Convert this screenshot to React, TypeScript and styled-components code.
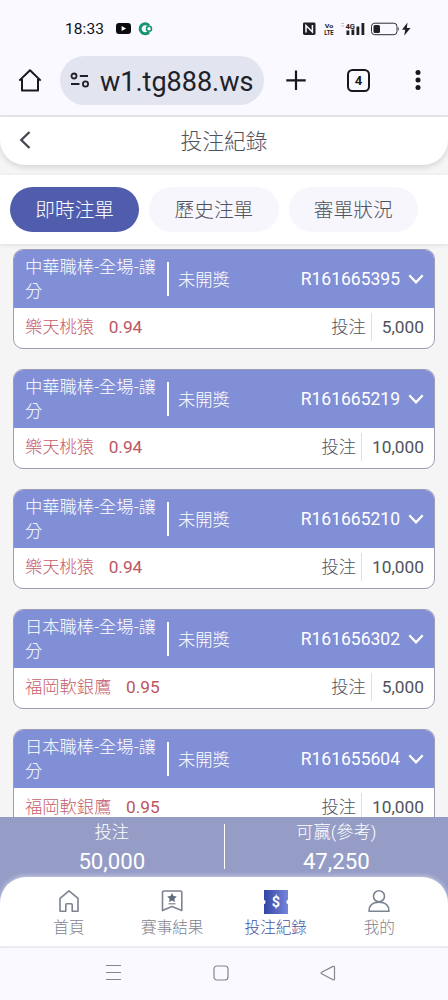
import React from "react";
import styled, { createGlobalStyle } from "styled-components";

interface Bet {
  id: string;
  play: string;
  team: string;
  odds: string;
  amount: string;
}

const bets: Bet[] = [
  { id: "R161665395", play: "中華職棒-全場-讓分", team: "樂天桃猿", odds: "0.94", amount: "5,000" },
  { id: "R161665219", play: "中華職棒-全場-讓分", team: "樂天桃猿", odds: "0.94", amount: "10,000" },
  { id: "R161665210", play: "中華職棒-全場-讓分", team: "樂天桃猿", odds: "0.94", amount: "10,000" },
  { id: "R161656302", play: "日本職棒-全場-讓分", team: "福岡軟銀鷹", odds: "0.95", amount: "5,000" },
  { id: "R161655604", play: "日本職棒-全場-讓分", team: "福岡軟銀鷹", odds: "0.95", amount: "10,000" },
];

const tabs = ["即時注單", "歷史注單", "審單狀況"];

const GlobalStyle = createGlobalStyle`
  * {
    box-sizing: border-box;
  }
  body {
    margin: 0;
    font-family: Roboto, "Noto Sans CJK TC", sans-serif;
    font-weight: 300;
    color: #50525e;
  }
  svg {
    display: block;
    flex-shrink: 0;
  }
`;

const Screen = styled.div`
  display: flex;
  flex-direction: column;
  width: 448px;
  height: 1000px;
  overflow: hidden;
  background: #f5f5f5;
`;

const StatusBar = styled.div`
  display: flex;
  align-items: center;
  flex-shrink: 0;
  height: 48px;
  padding: 10px 37px 0 65px;
  background: #faf9ff;
`;

const Clock = styled.span`
  width: 51px;
  font-size: 15.5px;
  font-weight: 400;
  letter-spacing: 0.1px;
  color: #111;
`;

const StatusIcons = styled.div`
  margin-left: auto;
`;

const BrowserBar = styled.div`
  display: flex;
  align-items: center;
  flex-shrink: 0;
  height: 69px;
  padding: 0 20px 3px 17px;
  border-bottom: 2px solid #e9e9ed;
  background: #faf9ff;
`;

const AddressPill = styled.div`
  display: flex;
  align-items: center;
  width: 204px;
  height: 49px;
  margin: 0 20px 0 17px;
  padding-left: 10px;
  border-radius: 25px;
  background: #e2e4f0;
`;

const Url = styled.span`
  margin: 3px 0 0 10px;
  font-size: 27px;
  font-weight: 400;
  white-space: nowrap;
  color: #202127;
`;

const TabCount = styled.div`
  display: flex;
  align-items: center;
  justify-content: center;
  width: 23px;
  height: 23px;
  margin: 0 45px 0 39px;
  border: 2.2px solid #17181c;
  border-radius: 5.5px;
  font-size: 13px;
  font-weight: 700;
  color: #17181c;
`;

const PageHeader = styled.header`
  display: grid;
  grid-template-columns: 50px 1fr 50px;
  align-items: center;
  flex-shrink: 0;
  height: 48px;
  border-radius: 0 0 25px 25px;
  background: #fff;
  box-shadow: 0 2px 6px rgba(0, 0, 0, 0.14);
`;

const BackButton = styled.div`
  padding: 0 0 2px 18px;
`;

const Title = styled.div`
  padding-top: 2px;
  font-size: 21.8px;
  line-height: 46px;
  text-align: center;
`;

const TabRow = styled.nav`
  display: flex;
  gap: 10px;
  flex-shrink: 0;
  height: 69px;
  margin-top: 10px;
  padding: 12px 10px 0;
  background: #fff;
  box-shadow: 0 1px 4px rgba(0, 0, 0, 0.1);
`;

const Tab = styled.div<{ $active: boolean }>`
  width: 129.3px;
  height: 45px;
  border-radius: 23px;
  font-size: 19.7px;
  line-height: 48px;
  text-align: center;
  color: ${({ $active }) => ($active ? "#fff" : "#50525e")};
  background: ${({ $active }) => ($active ? "#505dac" : "#f6f6fc")};
`;

const BetList = styled.main`
  display: flex;
  flex-direction: column;
  gap: 20px;
  height: 573px;
  flex-shrink: 0;
  padding: 5px 13px 0;
  overflow: hidden;
`;

const Card = styled.div`
  flex-shrink: 0;
  height: 100px;
  border: 1.5px solid #9c9db4;
  border-radius: 10px;
  overflow: hidden;
  background: #fff;
  font-size: 17.3px;
`;

const CardHead = styled.div`
  display: flex;
  align-items: center;
  height: 58px;
  padding: 0 10px 0 11px;
  color: #fff;
  background: #818fd6;
`;

const Play = styled.div`
  width: 142px;
  padding-right: 8px;
  line-height: 24px;
`;

const Status = styled.div`
  display: flex;
  align-items: center;
  height: 34px;
  padding: 0 0 2px 9px;
  border-left: 2px solid #fff;
`;

const BetId = styled.div`
  margin: 0 8px 0 auto;
  font-size: 17.5px;
  font-weight: 400;
`;

const CardBody = styled.div`
  display: flex;
  align-items: center;
  height: 38px;
  padding: 0 10px 0 11px;
  line-height: 19px;
`;

const Team = styled.span`
  color: #c5606c;
`;

const Odds = styled.span`
  margin: 0 auto 0 14.5px;
  font-weight: 400;
  color: #bd5562;
`;

const Amount = styled.span`
  display: flex;
  align-items: center;
  height: 28px;
  margin-left: 5px;
  padding-left: 10px;
  border-left: 1px solid #dedee2;
  font-weight: 400;
`;

const Summary = styled.div`
  display: flex;
  flex-shrink: 0;
  height: 90px;
  padding-top: 2px;
  background: #959dc7;
`;

const SummaryItem = styled.div`
  flex: 1;
  text-align: center;
  color: #fff;
`;

const SummaryDivider = styled.div`
  width: 1px;
  height: 45px;
  margin-top: 5px;
  background: #fff;
`;

const SummaryLabel = styled.div`
  font-size: 17.3px;
  line-height: 26px;
`;

const SummaryValue = styled.div`
  margin-top: 3px;
  font-size: 22.2px;
  font-weight: 400;
  line-height: 26px;
`;

const BottomNav = styled.nav`
  display: flex;
  flex-shrink: 0;
  height: 69px;
  margin-top: -30px;
  padding: 11px 17px 0;
  border-radius: 26px 26px 0 0;
  background: #fff;
  box-shadow: 0 -1px 5px rgba(255, 255, 255, 0.5);
  z-index: 1;
`;

const NavItem = styled.div<{ $active?: boolean }>`
  display: flex;
  flex: 1;
  flex-direction: column;
  align-items: center;
  gap: 1px;
  font-size: 15.6px;
  line-height: 26px;
  color: ${({ $active }) => ($active ? "#4453a4" : "#81838f")};
`;

const SystemBar = styled.div`
  display: flex;
  align-items: center;
  justify-content: space-between;
  flex-shrink: 0;
  height: 54px;
  padding: 0 112px 3px 105px;
  border-top: 2px solid #e9e9ef;
  background: #faf9ff;
`;

const NotificationIcons = () => (
  <svg width="40" height="16" viewBox="0 0 40 16">
    <rect x="0" y="2" width="15" height="11" rx="3" fill="#0c0c0e" />
    <path d="M5.6 5v5l4.5-2.5z" fill="#fff" />
    <path d="M33 4.600A5 5 0 1 0 33 11" fill="none" stroke="#159570" strokeWidth="3" />
    <circle cx="33" cy="7.800" r="2.500" fill="#faf9ff" stroke="#159570" strokeWidth="1.600" />
  </svg>
);

const SignalIcons = () => (
  <svg width="108" height="18" viewBox="0 0 108 18" fill="#202024" fontFamily="Roboto" fontWeight="700">
    <rect x="0" y="2.500" width="12.500" height="12.500" rx="1.400" />
    <path d="M3 12.500v-7l6.400 6.500V5" fill="none" stroke="#faf9ff" strokeWidth="1.500" />
    <text x="21.800" y="7.800" fontSize="6" textLength="8.500" lengthAdjust="spacingAndGlyphs">Vo</text>
    <text x="21.200" y="15" fontSize="6.500" textLength="9.500" lengthAdjust="spacingAndGlyphs">LTE</text>
    <path d="M38 3.500h3M38 6h3" stroke="#c2c2c8" />
    <text x="42.500" y="8.500" fontSize="8" textLength="9.500" lengthAdjust="spacingAndGlyphs">4G</text>
    <path d="M43.500 10.500h2.800V15h-2.800zM48.500 9.500h2.800V15h-2.800zM53.500 6.500h2.800V15h-2.800zM58.500 3h2.800v12h-2.800z" />
    <rect x="68.500" y="3.200" width="25.500" height="11.500" rx="3.200" fill="none" stroke="#2c2c31" />
    <rect x="70.500" y="5" width="6.500" height="8" rx="1.500" />
    <path d="M95.300 6.800q1.600 2 0 4.200z" />
    <path d="M104.500 2.500l-5.500 7.200h3.200l-1 6 6.300-7.700h-3.700z" />
  </svg>
);

const HomeIcon = () => (
  <svg width="26" height="26" viewBox="0 0 26 26" fill="none" stroke="#17181c" strokeWidth="2">
    <path d="M5 12v11.500h16V12M2.300 13.600L13 3.200l10.700 10.400" strokeLinejoin="round" />
  </svg>
);

const TuneIcon = () => (
  <svg width="20" height="18" viewBox="0 0 20 18" fill="none" stroke="#202127" strokeWidth="1.800">
    <circle cx="4" cy="5" r="2.500" />
    <path d="M9.800 5H18M1 13h8.500" />
    <circle cx="15.500" cy="13" r="2.600" />
  </svg>
);

const PlusIcon = () => (
  <svg width="24" height="24" viewBox="0 0 24 24" stroke="#17181c" strokeWidth="2.200">
    <path d="M12 2.500v19.500M2.300 12.300h19.400" />
  </svg>
);

const MenuDots = () => (
  <svg width="6" height="22" viewBox="0 0 6 22" fill="#17181c">
    <circle cx="3" cy="3.400" r="2.500" />
    <circle cx="3" cy="11" r="2.500" />
    <circle cx="3" cy="18.500" r="2.500" />
  </svg>
);

const BackIcon = () => (
  <svg width="13" height="20" viewBox="0 0 13 20" fill="none" stroke="#45464d" strokeWidth="2.300">
    <path d="M11.500 2L3.300 10l8.200 8" />
  </svg>
);

const ChevronIcon = () => (
  <svg width="16" height="12" viewBox="0 0 16 12" fill="none" stroke="#fff" strokeWidth="2.200">
    <path d="M1.300 2.300L8 9.300l6.700-7" />
  </svg>
);

const NavHomeIcon = () => (
  <svg width="26" height="26" viewBox="0 0 26 26" fill="none" stroke="#7c8391" strokeWidth="1.600" strokeLinejoin="round">
    <path d="M4 10.300L13 2.800l9 7.500v12.900h-5.800v-6.400q0-1-1-1h-4.400q-1 0-1 1v6.400H4z" />
  </svg>
);

const ResultIcon = () => (
  <svg width="26" height="26" viewBox="0 0 26 26" fill="none" stroke="#7c8391" strokeWidth="1.600" strokeLinejoin="round">
    <path d="M5 3h16.500q1.300 0 1.300 1.300v18.300L13 18.600l-9.500 4V4.300Q3.500 3 5 3z" />
    <path d="M13 5l1.500 3 3.300.4-2.400 2.300.6 3.300-3-1.600-3 1.600.6-3.300-2.400-2.300 3.300-.4z" fill="#606a7d" stroke="none" />
    <path d="M9.500 15.800h7" strokeWidth="1.200" />
  </svg>
);

const TicketIcon = () => (
  <svg width="26" height="26" viewBox="0 0 26 26">
    <defs>
      <linearGradient id="ticket" x1="0" y1="0" x2="1" y2="0">
        <stop offset="0" stopColor="#3145a4" />
        <stop offset="1" stopColor="#7786db" />
      </linearGradient>
    </defs>
    <path d="M1 2h24v9.700a2.400 2.400 0 0 0 0 4.500V26H1v-9.800a2.400 2.400 0 0 0 0-4.500z" fill="url(#ticket)" />
    <text x="13" y="18.800" fontSize="14.500" fontFamily="Roboto" fontWeight="700" textAnchor="middle" fill="#fff">
      $
    </text>
  </svg>
);

const UserIcon = () => (
  <svg width="26" height="26" viewBox="0 0 26 26" fill="none" stroke="#7c8391" strokeWidth="1.600" strokeLinejoin="round">
    <circle cx="13" cy="8.200" r="5.500" />
    <path d="M3 23.300c0-6 4-9 10-9s10 3 10 9z" />
  </svg>
);

const RecentsIcon = () => (
  <svg width="17" height="18" viewBox="0 0 17 18" stroke="#85858c" strokeWidth="1.200">
    <path d="M1 1.500h15M1 8.500h15M1 15.500h15" />
  </svg>
);

const SquareIcon = () => (
  <svg width="16" height="16" viewBox="0 0 16 16" fill="none" stroke="#85858c" strokeWidth="1.200">
    <rect x="1" y="1" width="14" height="14" rx="3" />
  </svg>
);

const TriangleIcon = () => (
  <svg width="16" height="16" viewBox="0 0 16 16" fill="none" stroke="#85858c" strokeWidth="1.200" strokeLinejoin="round">
    <path d="M1.600 7.300L13 1.400q1.500-.5 1.500 1v11.400q0 1.500-1.500 1L1.600 8.700q-1-.7 0-1.400z" />
  </svg>
);

const BetCard: React.FC<{ bet: Bet }> = ({ bet }) => (
  <Card>
    <CardHead>
      <Play>{bet.play}</Play>
      <Status>未開獎</Status>
      <BetId>{bet.id}</BetId>
      <ChevronIcon />
    </CardHead>
    <CardBody>
      <Team>{bet.team}</Team>
      <Odds>{bet.odds}</Odds>
      <span>投注</span>
      <Amount>{bet.amount}</Amount>
    </CardBody>
  </Card>
);

const App: React.FC = () => (
  <>
    <GlobalStyle />
    <Screen>
      <StatusBar>
        <Clock>18:33</Clock>
        <NotificationIcons />
        <StatusIcons>
          <SignalIcons />
        </StatusIcons>
      </StatusBar>
      <BrowserBar>
        <HomeIcon />
        <AddressPill>
          <TuneIcon />
          <Url>w1.tg888.ws</Url>
        </AddressPill>
        <PlusIcon />
        <TabCount>4</TabCount>
        <MenuDots />
      </BrowserBar>
      <PageHeader>
        <BackButton>
          <BackIcon />
        </BackButton>
        <Title>投注紀錄</Title>
      </PageHeader>
      <TabRow>
        {tabs.map((tab, i) => (
          <Tab key={tab} $active={i === 0}>
            {tab}
          </Tab>
        ))}
      </TabRow>
      <BetList>
        {bets.map(bet => (
          <BetCard key={bet.id} bet={bet} />
        ))}
      </BetList>
      <Summary>
        <SummaryItem>
          <SummaryLabel>投注</SummaryLabel>
          <SummaryValue>50,000</SummaryValue>
        </SummaryItem>
        <SummaryDivider />
        <SummaryItem>
          <SummaryLabel>可贏(參考)</SummaryLabel>
          <SummaryValue>47,250</SummaryValue>
        </SummaryItem>
      </Summary>
      <BottomNav>
        <NavItem>
          <NavHomeIcon />
          首頁
        </NavItem>
        <NavItem>
          <ResultIcon />
          賽事結果
        </NavItem>
        <NavItem $active>
          <TicketIcon />
          投注紀錄
        </NavItem>
        <NavItem>
          <UserIcon />
          我的
        </NavItem>
      </BottomNav>
      <SystemBar>
        <RecentsIcon />
        <SquareIcon />
        <TriangleIcon />
      </SystemBar>
    </Screen>
  </>
);

export default App;
